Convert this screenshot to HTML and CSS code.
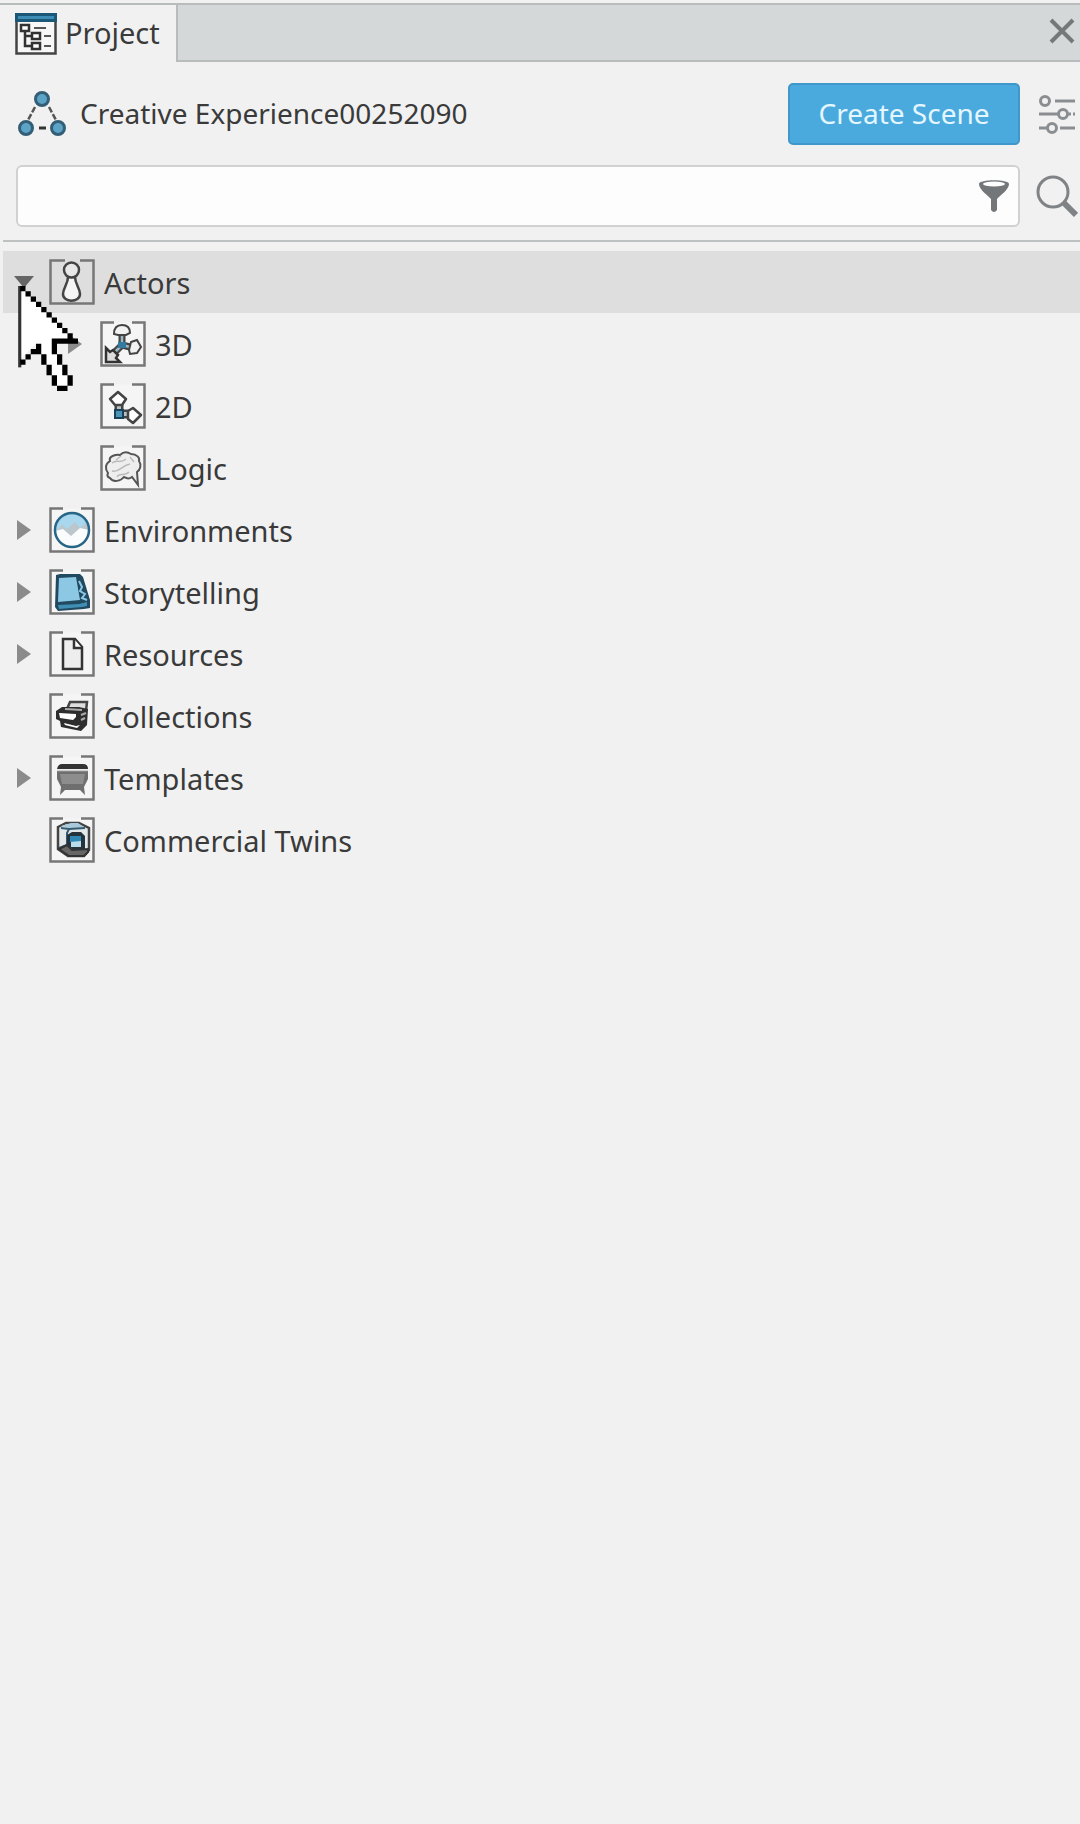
FILE: index.html
```
<!DOCTYPE html>
<html lang="en">
<head>
    <meta charset="UTF-8">
    <meta name="viewport" content="width=device-width, initial-scale=1.0">
    <title>Project</title>
    <link rel="stylesheet" href="styles.css">
</head>
<body>
    <header class="tab-bar">
        <div class="tab">
            <svg width="42" height="42" viewBox="0 0 42 42">
                <rect x="1.5" y="1.5" width="39" height="39" fill="#f7f7f7" stroke="#444" stroke-width="2.5"/>
                <path d="M0 0h42v9H0z" fill="#1b5878"/>
                <path d="M3 4.5h36" stroke="#3c8db5" stroke-width="3"/>
                <path d="M10 18v15h7M10 23h7" fill="none" stroke="#333" stroke-width="2.5"/>
                <g fill="#fff" stroke="#333" stroke-width="2.5">
                    <rect x="6" y="12" width="8" height="6"/>
                    <rect x="17" y="20" width="8" height="6"/>
                    <rect x="17" y="30" width="8" height="6"/>
                </g>
                <path d="M19 15h12M29 23h7M29 33h7" stroke="#555" stroke-width="2"/>
            </svg>
            <span class="label">Project</span>
        </div>
        <div class="tab-space">
            <button class="icon-button" type="button" aria-label="Close">
                <svg width="26" height="26" viewBox="0 0 26 26"><path d="M2 2l22 22M24 2L2 24" stroke="#74787a" stroke-width="4"/></svg>
            </button>
        </div>
    </header>

    <div class="toolbar">
        <svg width="50" height="48" viewBox="0 0 50 48">
            <path d="M19 17l-7 13M33 17l7 13" stroke="#555" stroke-width="2.5" stroke-dasharray="6 2"/>
            <path d="M23 38h7" stroke="#333" stroke-width="3"/>
            <g fill="#5ba4c8" stroke="#355e76" stroke-width="3">
                <circle cx="26" cy="9" r="6.5"/>
                <circle cx="10" cy="38" r="6.5"/>
                <circle cx="42" cy="38" r="6.5"/>
            </g>
        </svg>
        <span class="label project-name">Creative Experience00252090</span>
        <button class="create-button" type="button"><span class="label">Create Scene</span></button>
        <button class="icon-button side-button" type="button" aria-label="Options">
            <svg width="36" height="40" viewBox="0 0 36 40" fill="none" stroke="#8b8e90" stroke-width="3">
                <circle cx="6" cy="7" r="4.5"/><path d="M16 7h20"/>
                <circle cx="24" cy="20" r="4.5"/><path d="M0 20h19M29 20h3M34 20h2"/>
                <circle cx="13" cy="34" r="4.5"/><path d="M0 34h8M21 34h15"/>
            </svg>
        </button>
    </div>

    <form class="search-bar">
        <div class="search-field">
            <input type="text" aria-label="Search">
            <button class="icon-button" type="button" aria-label="Filter">
                <svg width="32" height="34" viewBox="0 0 32 34">
                    <path d="M1 5c0-5 30-5 30 0 0 5-6 9-12 15v11q-3 4-6 0V20C7 14 1 10 1 5z" fill="#74777a"/>
                    <ellipse cx="16" cy="5" rx="11" ry="2.5" fill="#fff"/>
                </svg>
            </button>
        </div>
        <button class="icon-button side-button" type="submit" aria-label="Find">
            <svg width="42" height="44" viewBox="0 0 42 44" fill="none" stroke="#808385">
                <circle cx="17" cy="18" r="15" stroke-width="3"/>
                <path d="M28 29l12 12" stroke-width="6"/>
            </svg>
        </button>
    </form>

    <!-- bracket frame shared by all node icons -->
    <svg width="0" height="0" class="defs">
        <symbol id="frame" viewBox="0 0 46 46">
            <path d="M14 1.5H1.5v43h43v-43H32" fill="#f5f5f5" stroke="#777" stroke-width="2.5"/>
        </symbol>
    </svg>

    <ul class="tree">
        <li>
            <div class="node selected">
                <button class="toggle open" type="button" aria-label="Collapse Actors"></button>
                <svg class="node-icon" viewBox="0 0 46 46">
                    <path d="M16 1.5H1.5v43h43v-43H31" fill="none" stroke="#777" stroke-width="2.5"/>
                    <path d="M19 18h7c0 7 5 11 5 17 0 9-17 9-17 0 0-6 5-10 5-17z" fill="#f5f5f5" stroke="#444" stroke-width="2.5"/>
                    <circle cx="22.5" cy="11" r="7.5" fill="#e8e8e8" stroke="#444" stroke-width="2.5"/>
                </svg>
                <span>Actors</span>
            </div>
            <ul>
                <li class="node">
                    <button class="toggle" type="button" aria-label="Expand 3D"></button>
                    <svg class="node-icon" viewBox="0 0 46 46">
                        <use href="#frame"/>
                        <path d="M22 24V13M22 24l12 3M22 24L12 34" stroke="#444" stroke-width="7"/>
                        <path d="M22 24V13M22 24l12 3M22 24L12 34" stroke="#9db9c7" stroke-width="2.5"/>
                        <path d="M14 13q0-9 8-9t8 8l-4 2h-8z" fill="#f2f2f2" stroke="#444" stroke-width="2"/>
                        <path d="M31 21l6-2 4 7-4 6-7 1-1-4z" fill="#f2f2f2" stroke="#444" stroke-width="2"/>
                        <path d="M6 27l4 4 3-2 5 5-2 3 4 4H6z" fill="#ddd" stroke="#333" stroke-width="2.5"/>
                        <path d="M18 21h8v6h-8z" fill="#327aa0"/>
                    </svg>
                    <span>3D</span>
                </li>
                <li class="node">
                    <span class="toggle-space"></span>
                    <svg class="node-icon" viewBox="0 0 46 46">
                        <use href="#frame"/>
                        <path d="M19 18v13h12" fill="none" stroke="#444" stroke-width="9"/>
                        <path d="M19 17v14h13" fill="none" stroke="#b5bfc5" stroke-width="4"/>
                        <path d="M15 27h8v8h-8z" fill="#4c93b8" stroke="#17425a" stroke-width="2"/>
                        <path d="M10 16l8-7 8 7-4 6h-7zM28 28l5-3 8 7-8 8-5-4z" fill="#fff" stroke="#444" stroke-width="2.5" stroke-linejoin="round"/>
                    </svg>
                    <span>2D</span>
                </li>
                <li class="node">
                    <span class="toggle-space"></span>
                    <svg class="node-icon" viewBox="0 0 46 46">
                        <use href="#frame"/>
                        <path d="M10 16c-2-5 7-7 10-6 4-4 8-3 11-1 6 0 9 4 8 7 3 4 1 9-2 11l1 13-6-8c-4 3-6 1-8 0-3 4-11 6-14 1-3-1-3-3-2-5-3-4-3-9 2-12z" fill="#eee" stroke="#555" stroke-width="2"/>
                        <path d="M12 18c5-4 8 1 14-4M21 11l-5 4M12 26c8 2 10-6 18-7M17 32c2-5 7 0 12-5M30 12l4 5" fill="none" stroke="#bbb" stroke-width="1.5"/>
                    </svg>
                    <span>Logic</span>
                </li>
            </ul>
        </li>
        <li class="node">
            <button class="toggle" type="button" aria-label="Expand Environments"></button>
            <svg class="node-icon" viewBox="0 0 46 46">
                <use href="#frame"/>
                <circle cx="23" cy="23" r="17" fill="#a9d7ee"/>
                <path d="M7 24l6-6 5 4 8-7 5 6 7-6 2 9c-2 20-30 20-33 0z" fill="#bcc6cd"/>
                <path d="M6 24l8-2 8 7 9-8 9 2c0 22-32 23-34 1z" fill="#fafcfd"/>
                <circle cx="23" cy="23" r="17" fill="none" stroke="#276687" stroke-width="2.5"/>
            </svg>
            <span>Environments</span>
        </li>
        <li class="node">
            <button class="toggle" type="button" aria-label="Expand Storytelling"></button>
            <svg class="node-icon" viewBox="0 0 46 46">
                <use href="#frame"/>
                <path d="M7 6l4-1h20l3 3 7 23v8l-6 1-26 2-3-4z" fill="#21495f"/>
                <path d="M10 9l17-1 4 23-22 2z" fill="#8cc8e4"/>
                <path d="M9 36l21-1 8-2v4l-5 1-23 2z" fill="#3f8fb4"/>
                <path d="M30 12l3 6-2 4 5 3-3 4 5 2" fill="none" stroke="#8cc8e4" stroke-width="2"/>
            </svg>
            <span>Storytelling</span>
        </li>
        <li class="node">
            <button class="toggle" type="button" aria-label="Expand Resources"></button>
            <svg class="node-icon" viewBox="0 0 46 46">
                <use href="#frame"/>
                <path d="M14 8h12l7 8v22H14z" fill="#eee" stroke="#333" stroke-width="2.5"/>
                <path d="M25 8v9h8" fill="#fff" stroke="#333" stroke-width="2.5"/>
            </svg>
            <span>Resources</span>
        </li>
        <li class="node">
            <span class="toggle-space"></span>
            <svg class="node-icon" viewBox="0 0 46 46">
                <use href="#frame"/>
                <path d="M18 16l3-7h17l-1 9" fill="#ddd" stroke="#444" stroke-width="2.5"/>
                <path d="M7 18l6-4h17l9 2-1 16-6 6-20-4-1-6-4-2z" fill="#2e2e2e"/>
                <path d="M10 20l17 1v3l-3 3-13-2zM15 30l12 3 4-1-3 3-12-3z" fill="#fff"/>
                <path d="M16 16l17 1M32 22l5-2M32 27l4-2" stroke="#aaa" stroke-width="2"/>
            </svg>
            <span>Collections</span>
        </li>
        <li class="node">
            <button class="toggle" type="button" aria-label="Expand Templates"></button>
            <svg class="node-icon" viewBox="0 0 46 46">
                <use href="#frame"/>
                <path d="M8 16h31v8l-4 8 1 8-5-5H16l-5 5 1-8-4-8z" fill="#6f6f6f"/>
                <path d="M11 19h25l-2 10H13z" fill="#8d8d8d"/>
                <path d="M8 14q1-5 5-5h21q5 0 5 5z" fill="#333"/>
                <path d="M8 15.5h31" stroke="#ccc" stroke-width="1.5"/>
            </svg>
            <span>Templates</span>
        </li>
        <li class="node">
            <span class="toggle-space"></span>
            <svg class="node-icon" viewBox="0 0 46 46">
                <use href="#frame"/>
                <path d="M9 10l8-4h13l10 5v22l-5 6H19L9 32z" fill="#e3e8eb" stroke="#444" stroke-width="2.5"/>
                <path d="M12 9l10-3h7l6 4-12 2z" fill="#a9cadb"/>
                <path d="M12 11l8 1 16-1M20 12l-2 4v12l-8 3" fill="none" stroke="#345b70" stroke-width="2"/>
                <path d="M10 32l8-4 5 5 16-1v3l-4 4H20z" fill="#666" stroke="#333" stroke-width="2"/>
                <path d="M18 18l5-3h9l4 4v13H23l-5-4z" fill="#26333b"/>
                <path d="M22 19h10v11H22z" fill="#b9dcec"/>
                <path d="M21 19h11v5l-11 1z" fill="#2f87b4"/>
            </svg>
            <span>Commercial Twins</span>
        </li>
    </ul>

    <!-- mouse pointer, one unit per pointer pixel -->
    <svg class="pointer" viewBox="-1 0 12 20">
        <path d="M0 0L10 10H7v3l1 2 1 2v2H7l-1-2-1-2-1-2-1-2-3 3z" fill="#fff"/>
        <path d="M-.4 0h.6v15.500h-.6z" fill="#333"/>
        <path d="M0 0h1v1h1v1h1v1h1v1h1v1h1v1h1v1h1v1h1v1h1v1h1v1H7v2h1v2h1v2h1v2H9v1H7v-1H6v-2H5v-2H4v-2H3v0H2v1H1v1H0v-1h1v-1h1v-1h1v-1h1v2h1v2h1v2h1v2h2v-2H8v-2H7v-2H6v-3h3V9H8V8H7V7H6V6H5V5H4V4H3V3H2V2H1V1H0z" fill="#000"/>
    </svg>
</body>
</html>
```
FILE: styles.css
```
body {
    margin: 0;
    background: #f1f1f1;
    color: #3a3a3a;
    font: 28px/36px "Noto Sans", sans-serif;
}
button {
    padding: 0;
    border: none;
    background: none;
    font: inherit;
    cursor: pointer;
}
svg {
    display: block;
    flex-shrink: 0;
}
.defs {
    position: absolute;
}
.icon-button {
    display: flex;
    align-items: center;
    justify-content: center;
}
.label {
    display: block;
    padding-bottom: 2px;
}
.tab-bar {
    display: flex;
    margin-top: 3px;
    border-top: 2px solid #b9bcbc;
}
.tab {
    display: flex;
    align-items: center;
    gap: 8px;
    padding: 0 16px 0 15px;
    font-size: 29px;
}
.tab-space {
    display: flex;
    flex: 1;
    align-items: center;
    justify-content: flex-end;
    height: 51px;
    padding: 0 5px 4px 0;
    border-left: 2px solid #b9bcbc;
    border-bottom: 2px solid #b9bcbc;
    background: #d5d8d8;
}
.toolbar {
    display: flex;
    align-items: center;
    padding: 21px 2px 0 16px;
}
.project-name {
    flex: 1;
    margin-left: 14px;
}
.create-button {
    width: 232px;
    height: 62px;
    border: 2px solid #3f97cb;
    border-radius: 5px;
    background: #4aaade;
    color: #e4f6ff;
}
.side-button {
    width: 42px;
    margin-left: 16px;
}
.search-bar {
    display: flex;
    align-items: center;
    margin-left: 3px;
    padding: 20px 2px 13px 13px;
    border-bottom: 2px solid #bec1c1;
}
.search-field {
    display: flex;
    flex: 1;
    height: 58px;
    padding-right: 8px;
    border: 2px solid #d0d2d2;
    border-radius: 6px;
    background: #fdfdfd;
}
.search-field input {
    flex: 1;
    padding: 0 12px;
    border: none;
    outline: none;
    background: none;
    font: inherit;
}
.tree {
    margin: 9px 0 0 3px;
    font-size: 29px;
}
.tree,
.tree ul {
    padding: 0;
    list-style: none;
}
.tree ul {
    padding-left: 51px;
}
.node {
    display: flex;
    align-items: center;
    height: 62px;
}
.node span {
    padding-top: 2px;
}
.selected {
    background: #dedede;
}
.toggle,
.toggle-space {
    width: 42px;
    margin-right: 4px;
}
.toggle::before {
    content: "";
    display: block;
    width: 14px;
    height: 20px;
    margin: 0 auto;
    background: #8b8b8b;
    clip-path: polygon(0 0, 100% 50%, 0 100%);
}
.toggle.open::before {
    width: 20px;
    height: 12px;
    background: #666;
    clip-path: polygon(0 0, 100% 0, 50% 100%);
}
.node-icon {
    width: 46px;
    height: 46px;
    margin-right: 9px;
}
.pointer {
    position: absolute;
    left: 15px;
    top: 286px;
    width: 63px;
    height: 105px;
}
```
